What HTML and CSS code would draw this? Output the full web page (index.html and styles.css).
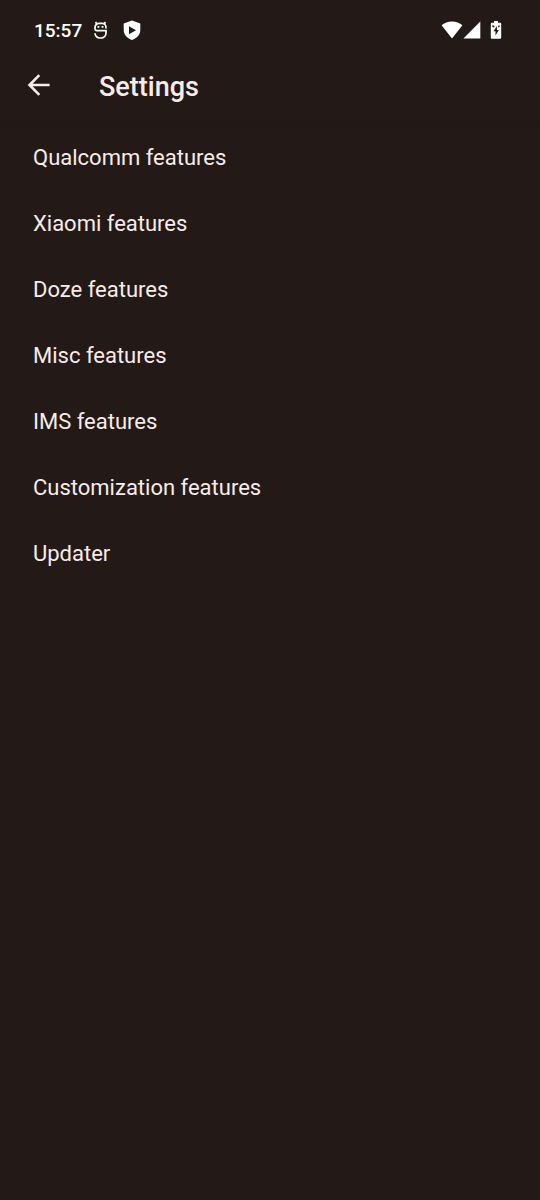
FILE: index.html
```html
<!DOCTYPE html>
<html lang="en">
<head>
<meta charset="utf-8">
<meta name="viewport" content="width=device-width, initial-scale=1">
<title>Settings</title>
<link rel="stylesheet" href="styles.css">
</head>
<body>
<div class="status-bar">
  <div class="status-left">
    <time class="clock">15:57</time>
    <svg class="icon-debug" viewBox="0 0 14 20" aria-hidden="true">
      <path d="M2.600 2l1 1.800M12.400 2l-1 1.800M13 8.400V7.400a4 4 0 0 0-4-4H6A4 4 0 0 0 2 7.400v1q0 2.200 2.200 2.200H13v2.600a4.800 4.800 0 0 1-4.800 4.800H6.800A4.800 4.800 0 0 1 2 13.200" fill="none" stroke="currentColor" stroke-width="1.700"/>
      <path d="M4.500 6h1.900v1.700H4.500zM8.600 6h1.900v1.700H8.600z" fill="currentColor"/>
    </svg>
    <svg class="icon-shield" viewBox="0 0 18 20" aria-hidden="true">
      <path fill="currentColor" fill-rule="evenodd" d="M9 0.500l8.300 3v6.300c0 5-3.300 8.500-8.300 10.200C4 18.300.7 14.800.7 9.800V3.500zM6 6.300v8l7-4z"/>
    </svg>
  </div>
  <div class="status-right">
    <svg class="icon-wifi" viewBox="0 0 22 18" aria-hidden="true">
      <path fill="currentColor" d="M11 0.500c4.100 0 7.600 1.500 10.400 3.800L11 17.500.6 4.300C3.400 2 6.900.5 11 .5z"/>
    </svg>
    <svg class="icon-signal" viewBox="0 0 18 18" aria-hidden="true">
      <path fill="currentColor" d="M17.300.4v17H.4z"/>
    </svg>
    <svg class="icon-battery" viewBox="0 0 12 20" aria-hidden="true">
      <path fill="currentColor" fill-rule="evenodd" d="M4 1h4v1.800h2.200q1 0 1 1v14q0 1-1 1H1.800q-1 0-1-1v-14q0-1 1-1H4zM6.900 6L3.500 11.200h2V15.500l3.300-5.600h-1.900zM2.400 5.300v1.600l2 .5V5.800zM9.600 5.300v1.600l-1.500.5V5.800z"/>
    </svg>
  </div>
</div>
<header class="app-bar">
  <button class="back" type="button" aria-label="Back">
    <svg class="icon-back" viewBox="0 0 24 24" aria-hidden="true">
      <path d="M13.300 2.200L3.500 12l9.800 9.800M3.500 12H23.600" fill="none" stroke="currentColor" stroke-width="2.600"/>
    </svg>
  </button>
  <h1 class="title">Settings</h1>
</header>
<main>
  <ul class="list">
    <li><button class="row" type="button">Qualcomm features</button></li>
    <li><button class="row" type="button">Xiaomi features</button></li>
    <li><button class="row" type="button">Doze features</button></li>
    <li><button class="row" type="button">Misc features</button></li>
    <li><button class="row" type="button">IMS features</button></li>
    <li><button class="row" type="button">Customization features</button></li>
    <li><button class="row" type="button">Updater</button></li>
  </ul>
</main>
</body>
</html>
```
FILE: styles.css
```css
* {
  box-sizing: border-box;
}

body {
  margin: 0;
  min-height: 100vh;
  background: #231a18;
  color: #f8ebe8;
  font-family: Roboto, "Liberation Sans", sans-serif;
}

svg {
  display: block;
  flex: none;
}

.status-bar {
  display: flex;
  align-items: center;
  justify-content: space-between;
  padding: 18px 38px 6px 34px;
  color: #ffffff;
}

.status-left,
.status-right {
  display: flex;
  align-items: center;
}

.clock {
  margin-right: 11px;
  padding-top: 2px;
  font-size: 19px;
  font-weight: 500;
  line-height: 22px;
}

.icon-debug {
  width: 14px;
  height: 20px;
  margin-right: 16px;
}

.icon-shield {
  width: 18px;
  height: 20px;
}

.icon-wifi {
  width: 22px;
  height: 18px;
}

.icon-signal {
  width: 18px;
  height: 18px;
  margin-right: 9px;
}

.icon-battery {
  width: 12px;
  height: 20px;
}

.app-bar {
  display: flex;
  align-items: center;
  gap: 34px;
  padding: 21px 26px 19px;
  border-bottom: 1px solid #211816;
}

.back {
  padding: 4px 7px 8px 0;
  border: 0;
  background: none;
  color: inherit;
}

.icon-back {
  width: 24px;
  height: 24px;
}

.title {
  margin: 0;
  padding-left: 8px;
  font-size: 27px;
  font-weight: 500;
  line-height: 36px;
}

.list {
  margin: 0;
  padding: 0;
  list-style: none;
}

.row {
  display: block;
  width: 100%;
  padding: 20px 33px;
  border: 0;
  background: none;
  color: inherit;
  font: inherit;
  font-size: 22px;
  line-height: 26px;
  text-align: left;
}
```
